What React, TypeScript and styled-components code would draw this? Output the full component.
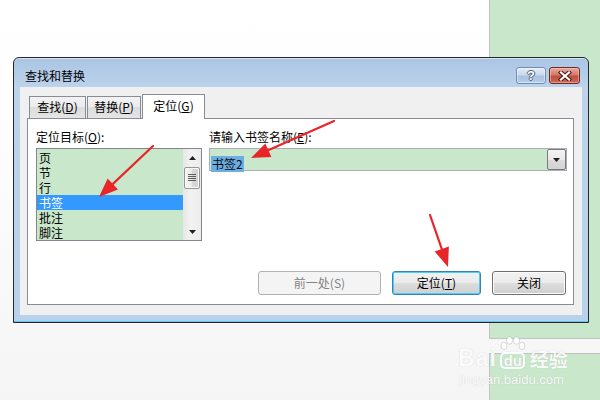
import React from 'react';
import styled, { createGlobalStyle, css } from 'styled-components';

const GlobalStyle = createGlobalStyle`
  html, body {
    margin: 0;
    padding: 0;
  }
  body {
    font-family: "Noto Sans CJK SC", "Noto Sans", sans-serif;
    color: #000;
  }
`;

const GREEN = '#c9e7cb';

const Page = styled.div`
  position: relative;
  width: 600px;
  height: 400px;
  overflow: hidden;
  box-sizing: border-box;
  padding: 57px 0 0 13px;
  background: linear-gradient(to bottom, #ffffff 0%, #fdfdfd 35%, #f5f5f5 100%);
`;

// green document pages behind the dialog
const Backdrop = styled.div`
  position: absolute;
  top: 0;
  right: 0;
  bottom: 0;
  width: 111px;
  display: flex;
  flex-direction: column;
  gap: 14px;
`;

const Sheet = styled.div<{ $edge: 'top' | 'bottom' }>`
  background: ${GREEN};
  border-left: 1px solid #c2c2c2;
  ${(p) =>
    p.$edge === 'top'
      ? css`
          height: 338px;
          border-bottom: 1px solid #c2c2c2;
        `
      : css`
          flex: 1;
          border-top: 1px solid #c2c2c2;
        `}
`;

const Dialog = styled.section`
  position: relative;
  z-index: 1;
  width: 576px;
  height: 266px;
  box-sizing: border-box;
  display: flex;
  flex-direction: column;
  padding: 0 6px 7px 6px;
  border: 1px solid #24282d;
  border-radius: 6px 6px 0 0;
  background: linear-gradient(to bottom, #a9c4e3 0px, #bdd3ec 29px, #b9d1ea 100%);
  box-shadow: inset 0 -1px 0 #5cc6ef, inset 0 1px 0 rgba(255, 255, 255, 0.55);
`;

const TitleBar = styled.header`
  height: 29px;
  box-sizing: border-box;
  display: flex;
  align-items: center;
  gap: 3px;
  padding: 6px 2px 0 5px;
`;

const Title = styled.h1`
  flex: 1;
  margin: 0;
  font-size: 12px;
  font-weight: normal;
  line-height: 16px;
`;

const CaptionButton = styled.div<{ $kind: 'help' | 'close' }>`
  width: ${(p) => (p.$kind === 'help' ? 30 : 31)}px;
  height: 17px;
  box-sizing: border-box;
  display: flex;
  align-items: center;
  justify-content: center;
  border-radius: 3px;
  ${(p) =>
    p.$kind === 'help'
      ? css`
          border: 1px solid #6f8db3;
          background: linear-gradient(to bottom, #e4ecf6 0%, #c9d9ec 45%, #a9c2e0 55%, #b7cde8 100%);
          box-shadow: inset 0 0 0 1px rgba(255, 255, 255, 0.45);
        `
      : css`
          border: 1px solid #6b2a24;
          background: linear-gradient(to bottom, #e9a99e 0%, #d47a6c 45%, #c14f3f 55%, #cd6a58 100%);
          box-shadow: inset 0 0 0 1px rgba(255, 220, 210, 0.45);
        `}
`;

const HelpGlyph = styled.span`
  font-family: "Liberation Sans", Arial, sans-serif;
  font-weight: bold;
  font-size: 13px;
  line-height: 13px;
  color: #fff;
  text-shadow: -1px 0 #4b5d78, 1px 0 #4b5d78, 0 -1px #4b5d78, 0 1px #4b5d78;
`;

const Client = styled.div`
  flex: 1;
  display: flex;
  flex-direction: column;
  box-sizing: border-box;
  padding: 8px 8px 10px 7px;
  background: #f0f0f0;
`;

const TabStrip = styled.div`
  position: relative;
  z-index: 1;
  display: flex;
  align-items: flex-end;
  height: 24px;
  padding-left: 2px;
  margin-bottom: -1px;
`;

const Tab = styled.div<{ $w: number; $active?: boolean }>`
  width: ${(p) => p.$w}px;
  box-sizing: border-box;
  display: flex;
  align-items: center;
  justify-content: center;
  font-size: 12px;
  line-height: 16px;
  border: 1px solid #898c95;
  border-bottom: none;
  ${(p) =>
    p.$active
      ? css`
          height: 25px;
          padding-bottom: 2px;
          background: #fff;
        `
      : css`
          height: 22px;
          padding-bottom: 1px;
          margin-bottom: 1px;
          margin-right: 1px;
          background: linear-gradient(to bottom, #f3f3f3 0%, #ebebeb 50%, #dcdcdc 50%, #e5e5e5 100%);
        `}
`;

const Key = styled.span`
  text-decoration: underline;
  text-underline-offset: 1px;
`;

const Panel = styled.div`
  flex: 1;
  display: grid;
  grid-template-columns: 166px 1fr;
  column-gap: 7px;
  box-sizing: border-box;
  padding: 10px 6px 9px 8px;
  background: #fff;
  border: 1px solid #898c95;
`;

const Column = styled.div`
  display: flex;
  flex-direction: column;
`;

const Label = styled.div`
  font-size: 12px;
  line-height: 16px;
  margin-bottom: 3px;
`;

const ListBox = styled.div`
  height: 93px;
  box-sizing: border-box;
  display: flex;
  border: 1px solid #828790;
  background: ${GREEN};
`;

const Items = styled.ul`
  flex: 1;
  margin: 0;
  padding: 1px 0 0;
  list-style: none;
  overflow: hidden;
`;

const Item = styled.li<{ $selected?: boolean }>`
  height: 15px;
  overflow: hidden;
  padding-left: 2px;
  font-size: 12px;
  line-height: 15px;
  ${(p) =>
    p.$selected &&
    css`
      background: #3399ff;
      color: #fff;
    `}
`;

const ScrollBar = styled.div`
  width: 18px;
  display: flex;
  flex-direction: column;
  background: linear-gradient(to right, #e6e6e6, #f2f2f2 40%, #ececec);
`;

const ScrollArrow = styled.div`
  height: 17px;
  display: flex;
  align-items: center;
  justify-content: center;
`;

const Track = styled.div`
  flex: 1;
  padding: 1px 1px 0;
`;

const Thumb = styled.div`
  height: 22px;
  box-sizing: border-box;
  display: flex;
  align-items: center;
  justify-content: center;
  border: 1px solid #969696;
  border-radius: 2px;
  background: linear-gradient(to right, #f5f5f5 0%, #e9e9e9 50%, #d9d9d9 51%, #d2d2d2 100%);
  box-shadow: inset 0 0 0 1px #fbfbfb;
`;

const Combo = styled.div`
  height: 23px;
  box-sizing: border-box;
  display: flex;
  border: 1px solid #abadb3;
  background: ${GREEN};
`;

const ComboText = styled.div`
  flex: 1;
  padding: 1px 0 0 1px;
`;

const Selection = styled.span`
  display: inline-block;
  padding: 0 1px;
  font-size: 12px;
  line-height: 16px;
  background: #6aaee4;
  color: #0a0a0a;
`;

const ComboButton = styled.div`
  width: 17px;
  display: flex;
  align-items: center;
  justify-content: center;
  border: 1px solid #7a7a7a;
  border-radius: 2px;
  background: linear-gradient(to bottom, #f4f4f4 0%, #e9e9e9 50%, #dcdcdc 51%, #d2d2d2 100%);
`;

const ButtonRow = styled.div`
  margin-top: auto;
  display: flex;
  justify-content: flex-end;
  gap: 11px;
  padding-right: 1px;
`;

const Button = styled.div<{ $w: number; $variant?: 'default' | 'disabled' }>`
  width: ${(p) => p.$w}px;
  height: 24px;
  box-sizing: border-box;
  display: flex;
  align-items: center;
  justify-content: center;
  font-size: 12px;
  line-height: 16px;
  border-radius: 3px;
  border: 1px solid #707070;
  background: linear-gradient(to bottom, #f2f2f2 0%, #ebebeb 50%, #dddddd 51%, #cfcfcf 100%);
  box-shadow: inset 0 0 0 1px #fcfcfc;
  ${(p) =>
    p.$variant === 'default' &&
    css`
      border-color: #3c7fb1;
      box-shadow: inset 0 0 0 1px #48d0fb;
    `}
  ${(p) =>
    p.$variant === 'disabled' &&
    css`
      border-color: #adb2b5;
      background: #f4f4f4;
      box-shadow: none;
      color: #838383;
    `}
`;

const Watermark = styled.div`
  position: absolute;
  left: 458px;
  top: 334px;
  z-index: 2;
  color: rgba(255, 255, 255, 0.92);
  text-shadow: 0 0 1px rgba(140, 140, 140, 0.4);
`;

const LogoRow = styled.div`
  display: flex;
  align-items: flex-end;
  gap: 2px;
  height: 35px;
`;

const LogoWord = styled.span`
  font-family: "Liberation Sans", Arial, sans-serif;
  font-weight: bold;
  font-size: 23px;
  line-height: 22px;
  letter-spacing: 1px;
`;

const PawBlock = styled.div`
  display: flex;
  flex-direction: column;
  align-items: center;
  width: 26px;
  margin: 0 2px 0 1px;
`;

const DuBox = styled.span`
  box-sizing: border-box;
  width: 25px;
  height: 17px;
  display: flex;
  align-items: center;
  justify-content: center;
  border: 2px solid rgba(255, 255, 255, 0.92);
  border-radius: 5px;
  font-family: "Liberation Sans", Arial, sans-serif;
  font-weight: bold;
  font-size: 15px;
  line-height: 13px;
  box-shadow: 0 0 1px rgba(140, 140, 140, 0.4);
`;

const LogoCjk = styled.span`
  font-family: "Noto Sans CJK SC", sans-serif;
  font-weight: bold;
  font-size: 19px;
  line-height: 20px;
`;

const Domain = styled.div`
  font-family: "Liberation Sans", Arial, sans-serif;
  font-size: 13px;
  line-height: 16px;
  margin-top: 3px;
  padding-left: 1px;
`;

const Overlay = styled.svg`
  position: absolute;
  inset: 0;
  z-index: 5;
  pointer-events: none;
`;

const Triangle = ({ up }: { up?: boolean }) => (
  <svg width="7" height="4" viewBox="0 0 7 4">
    <path d={up ? 'M0 4 L3.5 0 L7 4 Z' : 'M0 0 L7 0 L3.5 4 Z'} fill="#202020" />
  </svg>
);

const Grip = () => (
  <svg width="8" height="8" viewBox="0 0 8 8">
    {[0.5, 2.5, 4.5, 6.5].map((y) => (
      <line key={y} x1="0" x2="8" y1={y} y2={y} stroke="#5e5e5e" strokeWidth="1" />
    ))}
  </svg>
);

const CloseGlyph = () => (
  <svg width="14" height="10" viewBox="0 0 14 10">
    <path d="M3 1.5 L11 8.5 M11 1.5 L3 8.5" stroke="#4a1a16" strokeWidth="4.2" strokeLinecap="square" />
    <path d="M3 1.5 L11 8.5 M11 1.5 L3 8.5" stroke="#fff" strokeWidth="2.2" strokeLinecap="square" />
  </svg>
);

const Paw = () => (
  <svg width="28" height="16" viewBox="0 0 28 16">
    <g fill="rgba(255,255,255,0.92)" stroke="rgba(150,150,150,0.45)" strokeWidth="0.8">
      <ellipse cx="5" cy="10" rx="3" ry="3.6" />
      <ellipse cx="10.5" cy="4.5" rx="3" ry="3.8" />
      <ellipse cx="17.5" cy="4.5" rx="3" ry="3.8" />
      <ellipse cx="23" cy="10" rx="3" ry="3.6" />
    </g>
  </svg>
);

// red annotation arrows drawn over the screenshot
const arrows = [
  { from: [153, 146], to: [99, 197] },
  { from: [334, 121], to: [251, 158] },
  { from: [430, 215], to: [448, 267] },
];

const Arrow = ({ from, to }: { from: number[]; to: number[] }) => {
  const [x1, y1] = from;
  const [x2, y2] = to;
  const len = Math.hypot(x2 - x1, y2 - y1);
  const ux = (x2 - x1) / len;
  const uy = (y2 - y1) / len;
  const head = 19;
  const half = 7.5;
  const bx = x2 - ux * head;
  const by = y2 - uy * head;
  const pts = `${x2},${y2} ${bx - uy * half},${by + ux * half} ${bx + uy * half},${by - ux * half}`;
  return (
    <g>
      <line x1={x1} y1={y1} x2={bx + ux * 2} y2={by + uy * 2} stroke="#e8262a" strokeWidth="2.2" strokeLinecap="round" />
      <polygon points={pts} fill="#e8262a" />
    </g>
  );
};

const targets = ['页', '节', '行', '书签', '批注', '脚注'];

export default function App() {
  return (
    <>
      <GlobalStyle />
      <Page>
        <Backdrop>
          <Sheet $edge="top" />
          <Sheet $edge="bottom" />
        </Backdrop>

        <Dialog>
          <TitleBar>
            <Title>查找和替换</Title>
            <CaptionButton $kind="help">
              <HelpGlyph>?</HelpGlyph>
            </CaptionButton>
            <CaptionButton $kind="close">
              <CloseGlyph />
            </CaptionButton>
          </TitleBar>

          <Client>
            <TabStrip>
              <Tab $w={57}>
                查找(<Key>D</Key>)
              </Tab>
              <Tab $w={54}>
                替换(<Key>P</Key>)
              </Tab>
              <Tab $w={63} $active>
                定位(<Key>G</Key>)
              </Tab>
            </TabStrip>

            <Panel>
              <Column>
                <Label>
                  定位目标(<Key>O</Key>):
                </Label>
                <ListBox>
                  <Items>
                    {targets.map((t) => (
                      <Item key={t} $selected={t === '书签'}>
                        {t}
                      </Item>
                    ))}
                  </Items>
                  <ScrollBar>
                    <ScrollArrow>
                      <Triangle up />
                    </ScrollArrow>
                    <Track>
                      <Thumb>
                        <Grip />
                      </Thumb>
                    </Track>
                    <ScrollArrow>
                      <Triangle />
                    </ScrollArrow>
                  </ScrollBar>
                </ListBox>
              </Column>

              <Column>
                <Label>
                  请输入书签名称(<Key>E</Key>):
                </Label>
                <Combo>
                  <ComboText>
                    <Selection>书签2</Selection>
                  </ComboText>
                  <ComboButton>
                    <Triangle />
                  </ComboButton>
                </Combo>
                <ButtonRow>
                  <Button $w={123} $variant="disabled">
                    前一处(S)
                  </Button>
                  <Button $w={89} $variant="default">
                    定位(<Key>T</Key>)
                  </Button>
                  <Button $w={74}>关闭</Button>
                </ButtonRow>
              </Column>
            </Panel>
          </Client>
        </Dialog>

        <Watermark>
          <LogoRow>
            <LogoWord>Bai</LogoWord>
            <PawBlock>
              <Paw />
              <DuBox>du</DuBox>
            </PawBlock>
            <LogoCjk>经验</LogoCjk>
          </LogoRow>
          <Domain>jingyan.baidu.com</Domain>
        </Watermark>

        <Overlay width="600" height="400" viewBox="0 0 600 400">
          {arrows.map((a, i) => (
            <Arrow key={i} from={a.from} to={a.to} />
          ))}
        </Overlay>
      </Page>
    </>
  );
}
